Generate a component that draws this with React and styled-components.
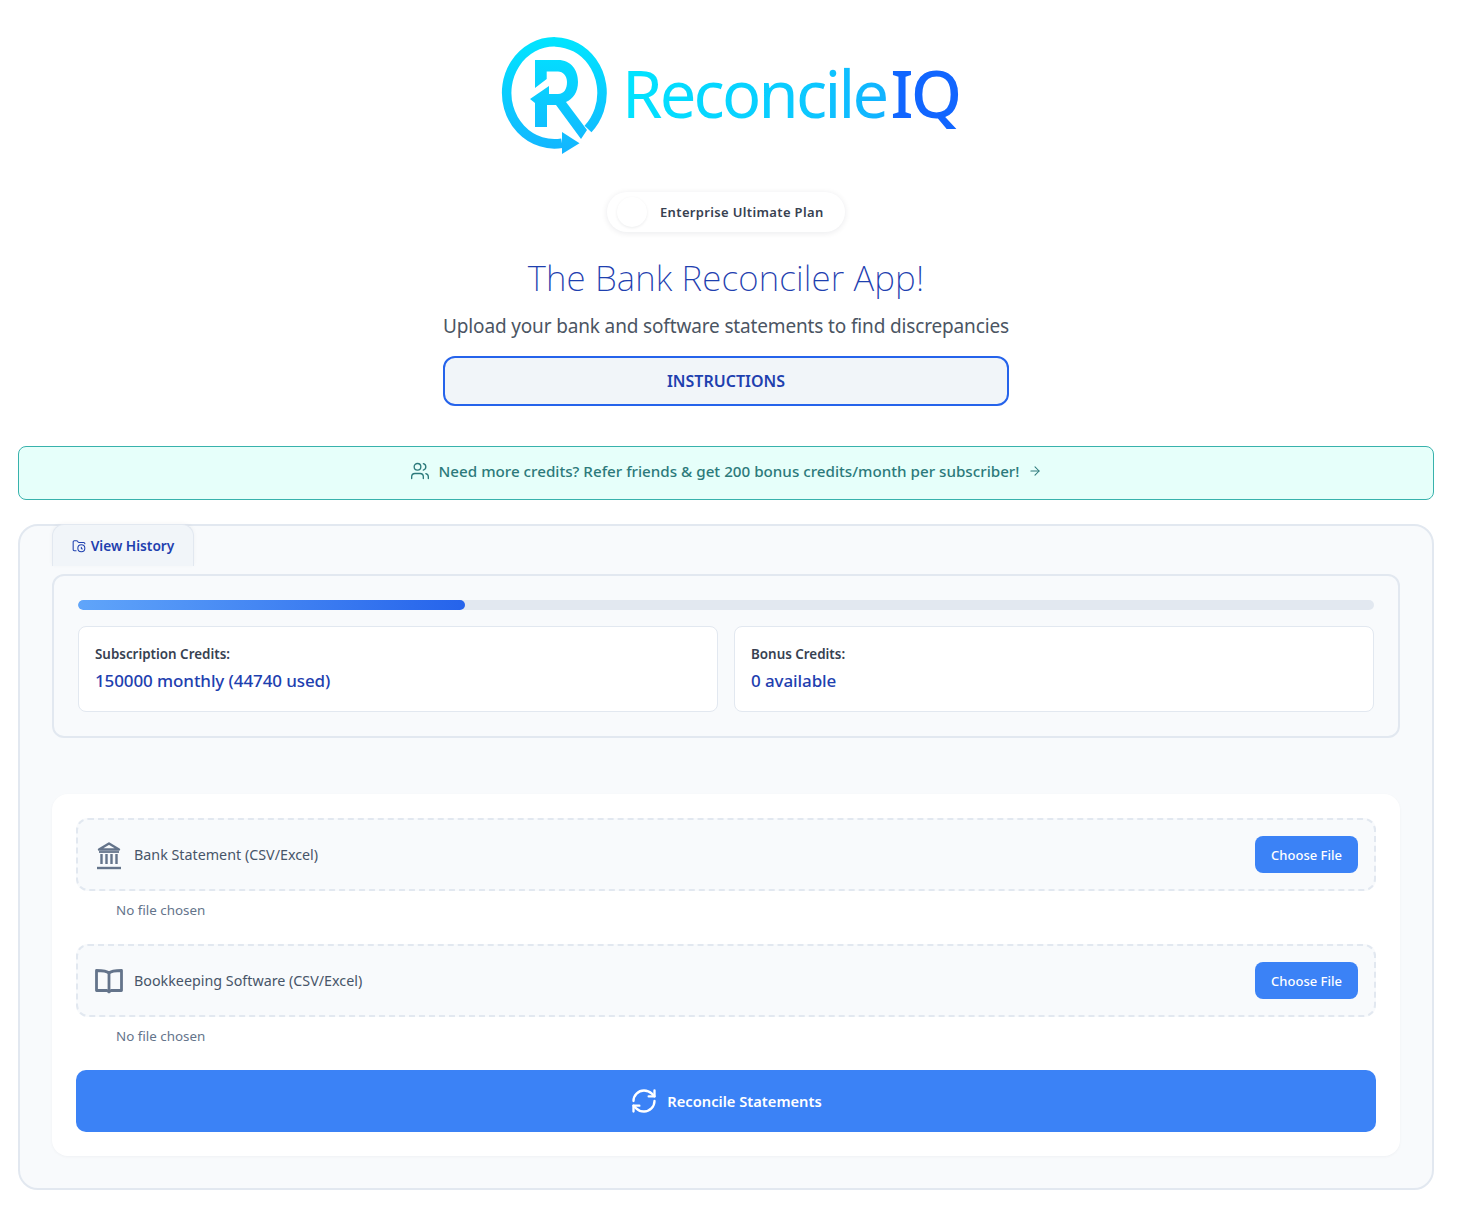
import React from 'react';
import styled, { createGlobalStyle } from 'styled-components';
import { Users, ArrowRight, FolderClock, RefreshCw } from 'lucide-react';

const GlobalStyle = createGlobalStyle`
  * {
    box-sizing: border-box;
  }
  body {
    margin: 0;
    background: #ffffff;
    font-family: "Noto Sans", "Open Sans", sans-serif;
  }
`;

const Page = styled.div`
  width: 1452px;
  height: 1207px;
  padding: 37px 18px 0;
  display: flex;
  flex-direction: column;
  align-items: center;
`;

const LogoRow = styled.div`
  height: 118px;
  margin-right: 4px;
  display: flex;
  align-items: flex-start;
`;

const LogoWord = styled.div`
  width: 326px;
  margin: 16px 0 0 14px;
  font-size: 65px;
  line-height: 80px;
  display: flex;
`;

const LogoLight = styled.span`
  font-weight: 400;
  letter-spacing: -2.75px;
  background: linear-gradient(100deg, #00e5ff 0%, #0cc8ff 70%, #12b0ff 100%);
  -webkit-background-clip: text;
  background-clip: text;
  color: transparent;
`;

const LogoStrong = styled.span`
  font-weight: 500;
  letter-spacing: -2.5px;
  color: #1166ff;
  margin-left: 4px;
`;

const PlanPill = styled.div`
  margin-top: 37px;
  width: 238px;
  height: 40px;
  padding: 0 10px;
  display: flex;
  align-items: center;
  gap: 13px;
  background: #ffffff;
  border-radius: 20px;
  box-shadow: 0 1px 6px rgba(15, 23, 42, 0.09);
`;

const PlanDot = styled.span`
  width: 30px;
  height: 30px;
  border-radius: 50%;
  background: #ffffff;
  box-shadow: 0 1px 3px rgba(15, 23, 42, 0.08);
`;

const PlanName = styled.span`
  font-size: 13px;
  font-weight: 600;
  letter-spacing: 0.35px;
  color: #374151;
`;

const Title = styled.h1`
  margin: 22px 0 0;
  font-size: 35px;
  line-height: 48px;
  font-weight: 200;
  letter-spacing: 0.15px;
  color: #1e40af;
`;

const Subtitle = styled.p`
  margin: 10px 0 0;
  font-size: 19px;
  line-height: 29px;
  letter-spacing: -0.15px;
  color: #4b5563;
`;

const InstructionsButton = styled.button`
  margin-top: 15px;
  width: 566px;
  height: 50px;
  background: #f1f5f9;
  border: 2px solid #2563eb;
  border-radius: 12px;
  font: 600 16px "Noto Sans", sans-serif;
  color: #1e40af;
`;

const ReferralBanner = styled.div`
  margin-top: 40px;
  width: 100%;
  height: 54px;
  padding-bottom: 4px;
  display: flex;
  align-items: center;
  justify-content: center;
  gap: 9px;
  background: #e6fffa;
  border: 1px solid #38b2ac;
  border-radius: 8px;
  font-size: 15.2px;
  font-weight: 500;
  color: #2c7a7b;
`;

const MainCard = styled.section`
  margin-top: 24px;
  width: 100%;
  height: 666px;
  padding: 0 32px;
  background: #f8fafc;
  border: 2px solid #e2e8f0;
  border-radius: 20px;
`;

const HistoryTab = styled.button`
  margin-top: -2px;
  width: 142px;
  height: 42px;
  display: flex;
  align-items: center;
  justify-content: center;
  gap: 5px;
  background: #f1f5f9;
  border: 1px solid #e2e8f0;
  border-bottom: 0;
  border-radius: 12px 12px 0 0;
  box-shadow: 0 -1px 4px rgba(15, 23, 42, 0.04);
  font: 600 13.7px "Noto Sans", sans-serif;
  color: #1e40af;
`;

const CreditsPanel = styled.div`
  margin-top: 8px;
  height: 164px;
  padding: 24px;
  border: 2px solid #e2e8f0;
  border-radius: 12px;
`;

const ProgressTrack = styled.div`
  height: 10px;
  background: #e2e8f0;
  border-radius: 5px;
  overflow: hidden;
`;

const ProgressFill = styled.div`
  height: 100%;
  background: linear-gradient(90deg, #60a5fa, #2563eb);
  border-radius: 5px;
`;

const CreditsGrid = styled.div`
  margin-top: 16px;
  display: grid;
  grid-template-columns: 1fr 1fr;
  gap: 16px;
`;

const CreditBox = styled.div`
  height: 86px;
  padding: 17px 16px 0;
  background: #ffffff;
  border: 1px solid #e2e8f0;
  border-radius: 8px;
`;

const CreditLabel = styled.div`
  font-size: 13.4px;
  line-height: 20px;
  font-weight: 600;
  color: #374151;
`;

const CreditValue = styled.div`
  margin-top: 4px;
  font-size: 17px;
  line-height: 26px;
  font-weight: 500;
  letter-spacing: -0.1px;
  color: #1e40af;
`;

const UploadCard = styled.div`
  margin-top: 56px;
  height: 362px;
  padding: 24px;
  background: #ffffff;
  border-radius: 16px;
  box-shadow: 0 1px 3px rgba(15, 23, 42, 0.04);
`;

const DropZone = styled.div`
  height: 73px;
  padding: 0 16px;
  display: flex;
  align-items: center;
  gap: 10px;
  background: #f8fafc;
  border: 2px dashed #e2e8f0;
  border-radius: 12px;
`;

const DropIcon = styled.svg`
  width: 30px;
  height: 30px;
  flex: none;
  color: #64748b;
`;

const DropLabel = styled.span`
  flex: 1;
  font-size: 14.3px;
  color: #475569;
`;

const ChooseButton = styled.button`
  width: 103px;
  height: 37px;
  background: #3b82f6;
  border: 0;
  border-radius: 8px;
  font: 500 13px "Noto Sans", sans-serif;
  color: #ffffff;
`;

const FileStatus = styled.div`
  height: 53px;
  padding: 9px 0 0 40px;
  font-size: 13.4px;
  line-height: 20px;
  color: #64748b;
`;

const ReconcileButton = styled.button`
  width: 100%;
  height: 62px;
  display: flex;
  align-items: center;
  justify-content: center;
  gap: 9px;
  background: #3b82f6;
  border: 0;
  border-radius: 10px;
  font: 600 14.7px "Noto Sans", sans-serif;
  color: #ffffff;
`;

const LogoMark = () => (
  <svg width="108" height="118" viewBox="0 0 108 118" fill="none">
    <defs>
      <linearGradient id="markGrad" x1="0" y1="0" x2="0" y2="118" gradientUnits="userSpaceOnUse">
        <stop offset="0" stopColor="#00e5ff" />
        <stop offset="1" stopColor="#14b4ff" />
      </linearGradient>
    </defs>
    <path d="M88 92 A47.7 51 0 1 0 62 106.2" stroke="url(#markGrad)" strokeWidth="9.5" />
    <path d="M62 95 L79.5 106.3 L62 117 Z" fill="url(#markGrad)" />
    <path
      d="M35 23 H58 C71 23 78 33 78 45 C78 55 73 62 66 65 L87 93 L81 102 L56 68 H47 V90 H35 V66 L30 62 L49 49 V57 H58 C64 57 67 52 67 45 C67 39 63 34.5 58 34.5 H46.7 V42 L35 51 Z"
      fill="url(#markGrad)"
    />
  </svg>
);

const BankIcon = () => (
  <DropIcon viewBox="0 0 30 30" fill="none" stroke="currentColor">
    <path d="M15 3.5 L25 9.5 H5 Z" strokeWidth="2.4" strokeLinejoin="round" />
    <path d="M5 12 H25" strokeWidth="1.8" />
    <path d="M7.5 14 V24 M12.5 14 V24 M17.5 14 V24 M22.5 14 V24" strokeWidth="2.4" />
    <path d="M3 28 H27" strokeWidth="2.4" />
  </DropIcon>
);

const BookIcon = () => (
  <DropIcon viewBox="0 0 30 30" fill="none" stroke="currentColor" strokeWidth="2.8" strokeLinejoin="round">
    <path d="M15 7 C13 5 10 4.5 2.5 4.5 V24.5 H13 L15 26 L17 24.5 H27.5 V4.5 C20 4.5 17 5 15 7 Z" />
    <path d="M15 7 V26" />
  </DropIcon>
);

const UploadRow = ({ icon, label }) => (
  <>
    <DropZone>
      {icon}
      <DropLabel>{label}</DropLabel>
      <ChooseButton>Choose File</ChooseButton>
    </DropZone>
    <FileStatus>No file chosen</FileStatus>
  </>
);

const App = () => {
  return (
    <Page>
      <GlobalStyle />
      <LogoRow>
        <LogoMark />
        <LogoWord>
          <LogoLight>Reconcile</LogoLight>
          <LogoStrong>IQ</LogoStrong>
        </LogoWord>
      </LogoRow>
      <PlanPill>
        <PlanDot />
        <PlanName>Enterprise Ultimate Plan</PlanName>
      </PlanPill>
      <Title>The Bank Reconciler App!</Title>
      <Subtitle>Upload your bank and software statements to find discrepancies</Subtitle>
      <InstructionsButton>INSTRUCTIONS</InstructionsButton>
      <ReferralBanner>
        <Users size={20} strokeWidth={1.6} />
        <span>Need more credits? Refer friends &amp; get 200 bonus credits/month per subscriber!</span>
        <ArrowRight size={14} strokeWidth={1.8} />
      </ReferralBanner>
      <MainCard>
        <HistoryTab>
          <FolderClock size={14} strokeWidth={1.8} />
          View History
        </HistoryTab>
        <CreditsPanel>
          <ProgressTrack>
            <ProgressFill style={{ width: `${(44740 / 150000) * 100}%` }} />
          </ProgressTrack>
          <CreditsGrid>
            <CreditBox>
              <CreditLabel>Subscription Credits:</CreditLabel>
              <CreditValue>150000 monthly (44740 used)</CreditValue>
            </CreditBox>
            <CreditBox>
              <CreditLabel>Bonus Credits:</CreditLabel>
              <CreditValue>0 available</CreditValue>
            </CreditBox>
          </CreditsGrid>
        </CreditsPanel>
        <UploadCard>
          <UploadRow icon={<BankIcon />} label="Bank Statement (CSV/Excel)" />
          <UploadRow icon={<BookIcon />} label="Bookkeeping Software (CSV/Excel)" />
          <ReconcileButton>
            <RefreshCw size={28} strokeWidth={2} />
            Reconcile Statements
          </ReconcileButton>
        </UploadCard>
      </MainCard>
    </Page>
  );
};

export default App;
